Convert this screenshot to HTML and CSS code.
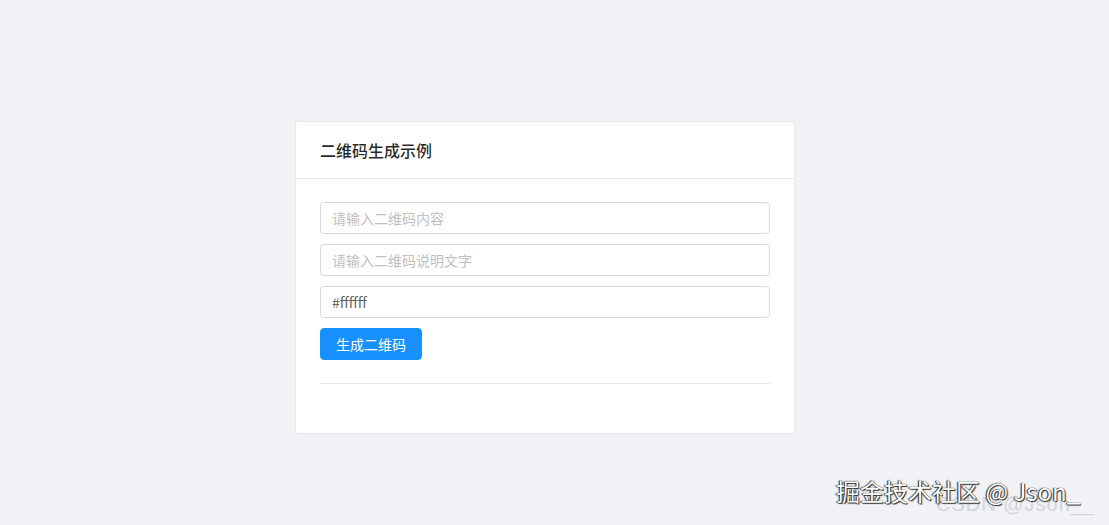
FILE: index.html
```html
<!DOCTYPE html>
<html lang="zh">
<head>
<meta charset="utf-8">
<link rel="stylesheet" href="styles.css">
</head>
<body>
<main class="page">
  <section class="card">
    <header class="card-head">二维码生成示例</header>
    <div class="card-body">
      <input class="field" type="text" placeholder="请输入二维码内容">
      <input class="field" type="text" placeholder="请输入二维码说明文字">
      <input class="field" type="text" value="#ffffff">
      <div class="actions"><button class="btn">生成二维码</button></div>
      <hr class="divider">
    </div>
  </section>
</main>
<div class="wm-csdn">CSDN @Json__</div>
<div class="wm-juejin">掘金技术社区 @ Json_</div>
</body>
</html>
```

FILE: styles.css
```css
html, body {
  margin: 0;
  padding: 0;
  background: #f0f2f5;
  font-family: "Noto Sans CJK SC", "Noto Sans", sans-serif;
  height: 100%;
}

.page {
  display: flex;
  justify-content: flex-start;
  padding-top: 121px;
  padding-left: 295px;
}

.card {
  width: 498px;
  background: #fff;
  border: 1px solid #e8e8e8;
  border-radius: 2px;
}

.card-head {
  padding: 16px 24px;
  height: 24px;
  line-height: 24px;
  font-size: 16px;
  font-weight: 500;
  color: rgba(0, 0, 0, 0.85);
  border-bottom: 1px solid #e8e8e8;
}

.card-body {
  padding: 23px 24px 24px;
  display: flex;
  flex-direction: column;
  gap: 10px;
}

.field {
  box-sizing: border-box;
  height: 32px;
  width: 100%;
  margin: 0;
  padding: 4px 11px;
  border: 1px solid #d9d9d9;
  border-radius: 4px;
  font-family: "Noto Sans CJK SC", "Noto Sans", sans-serif;
  font-size: 14px;
  color: rgba(0, 0, 0, 0.65);
  background: #fff;
  outline: none;
}

.field::placeholder {
  color: #bfbfbf;
}

.actions {
  display: flex;
}

.btn {
  height: 32px;
  padding: 0 15px;
  border: 1px solid #1890ff;
  border-radius: 4px;
  background: #1890ff;
  color: #fff;
  font-family: "Noto Sans CJK SC", "Noto Sans", sans-serif;
  font-size: 14px;
  line-height: 30px;
  cursor: pointer;
}

.divider {
  margin: 13px 0 25px;
  border: 0;
  border-top: 1px solid #e8e8e8;
  height: 0;
}

.wm-csdn {
  position: absolute;
  left: 936px;
  top: 492px;
  font-family: "Liberation Sans", sans-serif;
  font-size: 20px;
  line-height: 24px;
  color: #d3d5d8;
  letter-spacing: 1px;
  white-space: nowrap;
}

.wm-juejin {
  position: absolute;
  left: 836px;
  top: 474px;
  font-family: "Noto Sans CJK SC", sans-serif;
  font-size: 24px;
  line-height: 34px;
  color: #fff;
  white-space: nowrap;
  text-shadow: 0 0 1px #000, 1px 1px 1px #333, -1px 0 1px #333;
}
```
